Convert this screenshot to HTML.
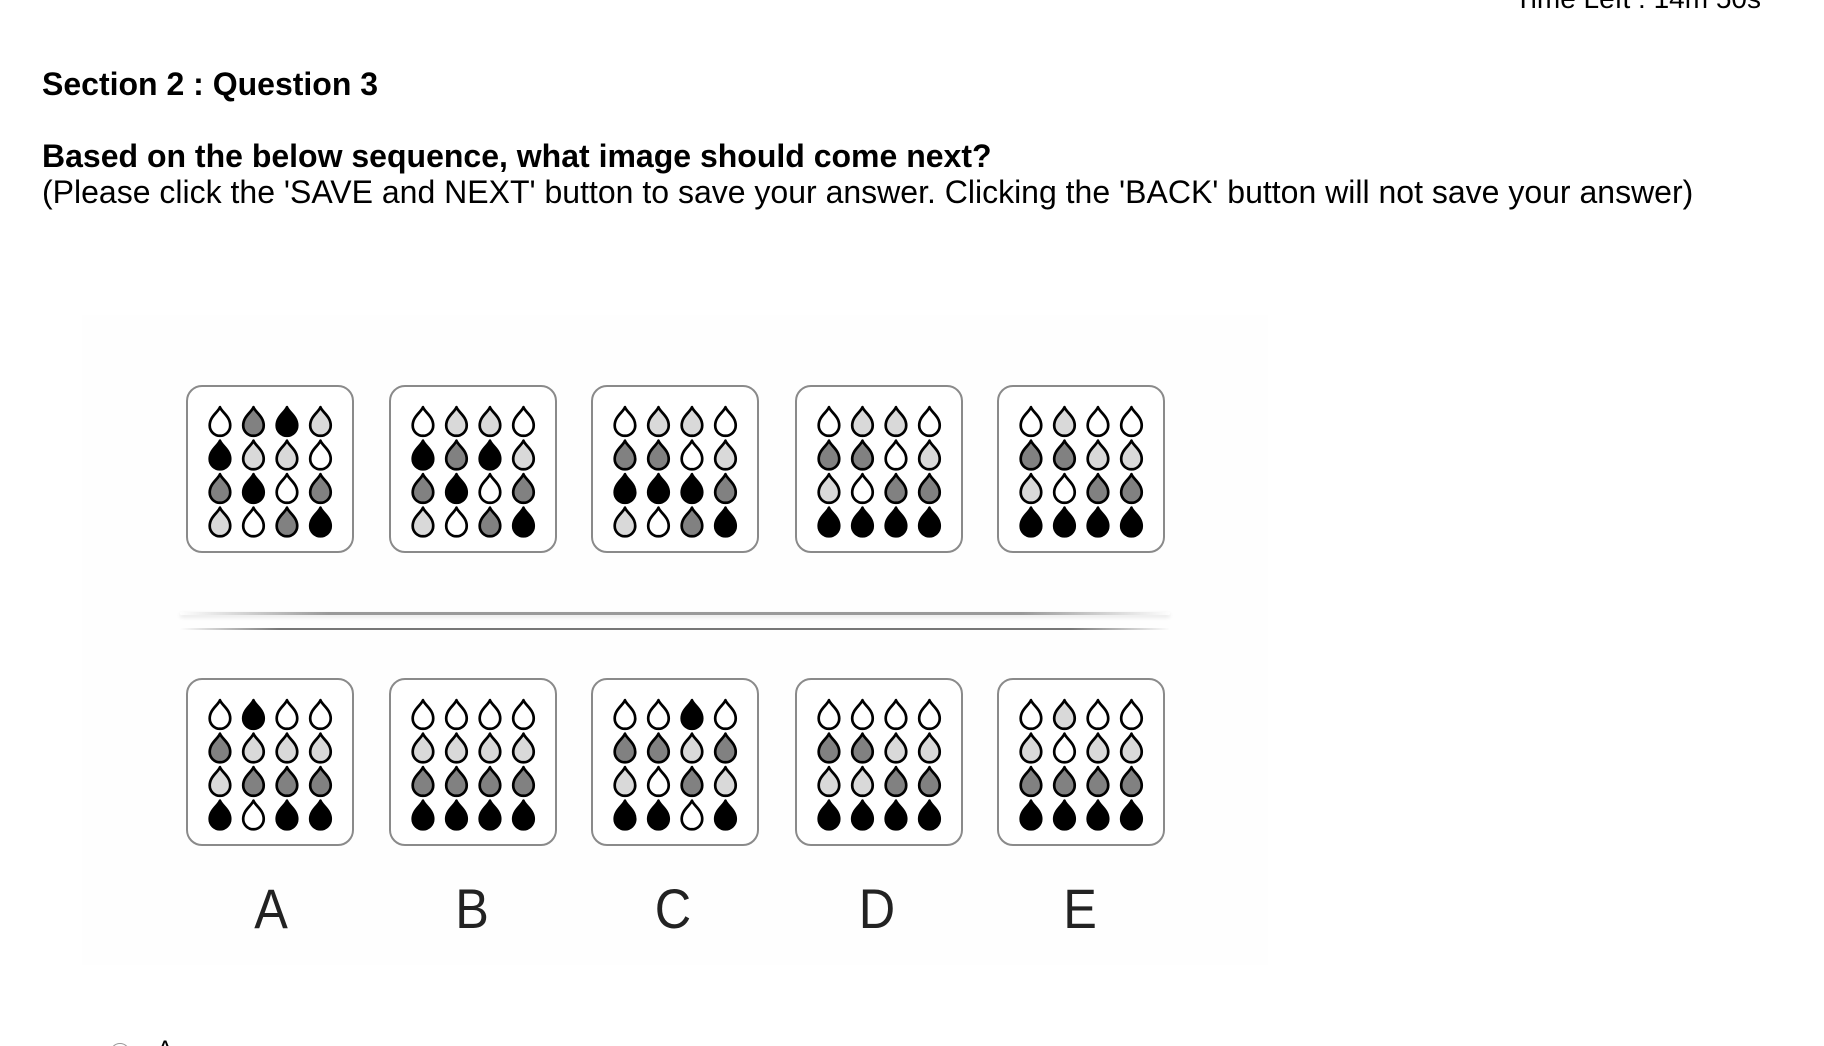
<!DOCTYPE html>
<html><head><meta charset="utf-8"><style>
html,body{margin:0;padding:0;background:#fff;width:1824px;height:1046px;overflow:hidden;position:relative;font-family:"Liberation Sans",Arial,sans-serif;color:#000}
.t{position:absolute;white-space:nowrap}
.box{position:absolute;width:168px;height:168px;border:2px solid #8a8a8a;border-radius:16px;background:#fff;box-sizing:border-box}
.let{position:absolute;font-family:"Liberation Sans",sans-serif;font-weight:normal;font-size:56px;color:#222;transform:translateX(-50%) scaleX(0.9)}
.line{position:absolute;height:3px;border-radius:2px}
</style></head><body>
<div class="t" style="right:63px;top:-17px;font-size:28px;">Time Left : 14m 50s</div>
<div class="t" style="left:42px;top:66px;font-size:32px;font-weight:bold;">Section 2 : Question 3</div>
<div class="t" style="left:42px;top:138px;font-size:32px;font-weight:bold;">Based on the below sequence, what image should come next?</div>
<div class="t" style="left:42px;top:174px;font-size:32px;">(Please click the 'SAVE and NEXT' button to save your answer. Clicking the 'BACK' button will not save your answer)</div>
<div style="position:absolute;left:82px;top:315px;width:1186px;height:650px;background:#fefefe;"></div>
<div class="line" style="left:180px;top:612px;width:990px;background:linear-gradient(90deg,rgba(0,0,0,0),#999 15%,#999 85%,rgba(0,0,0,0));box-shadow:0 2px 4px rgba(0,0,0,0.12)"></div>
<div class="line" style="left:180px;top:628px;width:990px;background:linear-gradient(90deg,rgba(0,0,0,0),#777 10%,#777 90%,rgba(0,0,0,0));height:2px"></div>
<div id="grid"></div>
<div class="let" style="left:271px;top:876px;">A</div>
<div class="let" style="left:472px;top:876px;">B</div>
<div class="let" style="left:673px;top:876px;">C</div>
<div class="let" style="left:877px;top:876px;">D</div>
<div class="let" style="left:1080px;top:876px;">E</div>
<div style="position:absolute;left:110px;top:1043px;width:18px;height:18px;border:1px solid #999;border-radius:50%"></div>
<div class="t" style="left:157px;top:1036px;font-size:24px;">A</div>
<script>
var COL={w:'#fff',l:'#d9d9d9',g:'#818181',k:'#000'};
var topRow=["wgkl kllw gkwg lwgk","wllw kgkl gkwg lwgk","wllw ggwl kkkg lwgk","wllw ggwl lwgg kkkk","wlww ggll lwgg kkkk"];
var botRow=["wkww glll lggg kwkk","wwww llll gggg kkkk","wwkw gglg lwgl kkwk","wwww ggll llgg kkkk","wlww lwll gggg kkkk"];
var xs=[186,389,591,795,997];
var h='';
function box(x,y,p){
 p=p.replace(/ /g,'');
 var s='<div class="box" style="left:'+x+'px;top:'+y+'px"><svg width="168" height="168" style="position:absolute;left:-2px;top:-2px">';
 for(var i=0;i<16;i++){var r=Math.floor(i/4),c=i%4;var cx=34+c*33.5,cy=36+r*33.5;
  s+='<path transform="translate('+(cx-13)+','+(cy-16)+') scale(1.08)" d="M12 2 C10.5 6.5 2.5 10.5 2.5 19 A9.5 9.5 0 0 0 21.5 19 C21.5 10.5 13.5 6.5 12 2Z" fill="'+COL[p[i]]+'" stroke="#000" stroke-width="2.5" stroke-linejoin="round"/>';}
 return s+'</svg></div>';
}
for(var i=0;i<5;i++){h+=box(xs[i],385,topRow[i]);h+=box(xs[i],678,botRow[i]);}
document.getElementById('grid').innerHTML=h;
</script>
</body></html>
